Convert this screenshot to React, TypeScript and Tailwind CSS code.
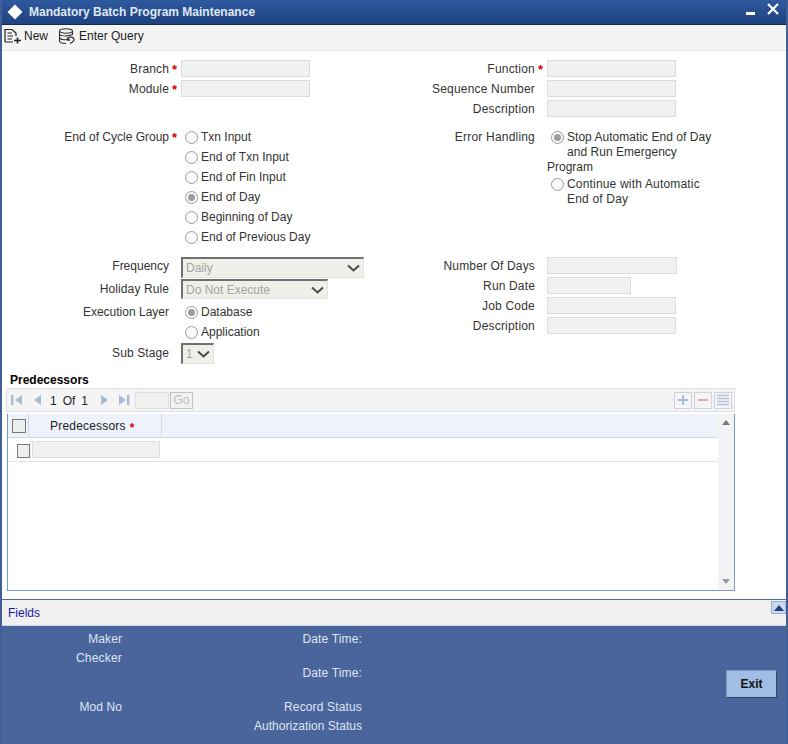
import React from "react";

const Star = () => <span className="text-[#cc0000] font-bold text-[13px] leading-none w-[8px] mt-[3px]">*</span>;

function Input({ w = 129, h = 17 }: { w?: number; h?: number }) {
  return <div className="bg-[#f1f1f1] border border-[#dcdcdc] box-border shrink-0" style={{ width: w, height: h }} />;
}

function Row({ label, labelW, star, inputW = 129, wide }: { label: string; labelW: number; star?: boolean; inputW?: number; wide?: boolean }) {
  return (
    <div className="flex items-start h-[20px]">
      <div className={wide ? "text-right leading-[19px] tracking-[0.2px] whitespace-nowrap" : "text-right leading-[19px] tracking-[0.15px] whitespace-nowrap"} style={{ width: labelW }}>{label}</div>
      <div className="w-[12px] pl-[3px] flex">{star && <Star />}</div>
      <Input w={inputW} />
    </div>
  );
}

function Radio({ checked }: { checked?: boolean }) {
  return (
    <span className="w-[13px] h-[13px] rounded-full border border-[#9a9a9a] bg-[#fafafa] flex items-center justify-center shrink-0">
      {checked && <span className="w-[7px] h-[7px] rounded-full bg-[#9c9c9c]" />}
    </span>
  );
}

function RadioRow({ label, checked }: { label: string; checked?: boolean }) {
  return (
    <div className="flex items-center gap-[3px] h-[20px] pl-[4px]">
      <Radio checked={checked} />
      <span>{label}</span>
    </div>
  );
}

function Sel({ w, text, h = 20 }: { w: number; text: string; h?: number }) {
  return (
    <div className="flex items-center justify-between box-border bg-[#f1efea] border-l-2 border-t-2 border-r border-b border-l-[#707070] border-t-[#707070] border-r-[#e4e2dd] border-b-[#e4e2dd] pl-[3px] pr-[3px] text-[#a3a3a3]" style={{ width: w, height: h }}>
      <span>{text}</span>
      <svg width="13" height="8" viewBox="0 0 13 8"><path d="M1 1.5 L6.5 6.5 L12 1.5" fill="none" stroke="#4a4a4a" strokeWidth="2" /></svg>
    </div>
  );
}

function Btn({ children }: { children: React.ReactNode }) {
  return <div className="w-[18px] h-[17px] border border-[#d0d4da] bg-[#f4f5f7] flex items-center justify-center">{children}</div>;
}

export default function App() {
  return (
    <div className="w-[788px] h-[744px] flex flex-col bg-white border-x-2 border-[#3f5f96] text-[12px] text-[#333] overflow-hidden" style={{ fontFamily: '"Liberation Sans", Arial, sans-serif' }}>
      {/* title */}
      <div className="h-[25px] shrink-0 -mx-[2px] flex items-center bg-gradient-to-b from-[#2f5a9f] to-[#1f427f] border-b border-[#13294f] pl-[7px] pr-[9px]">
        <svg width="16" height="16" viewBox="0 0 16 16" className="shrink-0"><path d="M8 0.5 L15.5 8 L8 15.5 L0.5 8Z" fill="#fff" /></svg>
        <span className="ml-[6px] font-bold text-[12px] text-[#dfe7f5]">Mandatory Batch Program Maintenance</span>
        <div className="ml-auto flex items-start gap-[12px]">
          <div className="w-[9px] h-[3px] bg-white mt-[3px]" />
          <svg width="12" height="12" viewBox="0 0 12 12" className="-mt-[6px]"><path d="M1 1 L11 11 M11 1 L1 11" stroke="#fff" strokeWidth="2.2" /></svg>
        </div>
      </div>
      {/* toolbar */}
      <div className="h-[26px] shrink-0 flex items-center bg-[#f4f4f4] border-b border-[#ececec] pl-[2px] pb-[3px] text-[#222]">
        <svg width="18" height="16" viewBox="0 0 18 16" fill="none" stroke="#222" strokeWidth="1.2"><path d="M1 14 V1.5 H8 L12 5 V8 M1 14 H9 M3.5 5 H8 M3.5 8 H9 M3.5 11 H8" /><path d="M10 12.5 H17 M13.5 9.5 V15.5" strokeWidth="1.6" /></svg>
        <span className="ml-[2px]">New</span>
        <svg width="18" height="17" viewBox="0 0 18 17" fill="none" stroke="#333" strokeWidth="1.1" className="ml-[10px]"><ellipse cx="8" cy="3" rx="6.5" ry="2.2" /><path d="M1.5 3 V13 C1.5 15 5 15.5 8 15.5 M14.5 3 V7 M1.5 6.5 C3 8.5 11 8.5 14.5 6.5 M1.5 10 C3 11.5 6 12 9 11.5" /><path d="M10 11 C11 8.5 15.5 8.5 16 11.5 C16 13.5 14 14.5 12 15.5 M9.5 9.5 V12 H12" strokeWidth="1.3" /></svg>
        <span className="ml-[3px]">Enter Query</span>
      </div>

      {/* form */}
      <div className="flex-1 flex flex-col min-h-0">
        <div className="flex pt-[9px]">
          <div className="w-[414px]">
            <Row label="Branch" labelW={167} star />
            <Row label="Module" labelW={167} star />
          </div>
          <div>
            <Row label="Function" labelW={119} star wide />
            <Row label="Sequence Number" labelW={119} wide />
            <Row label="Description" labelW={119} wide />
          </div>
        </div>

        <div className="flex pt-[9px] h-[130px] -mt-[1px] box-content">
          <div className="w-[414px] flex">
            <div className="w-[167px] text-right leading-[18px]">End of Cycle Group</div>
            <div className="w-[12px] pl-[3px] flex"><Star /></div>
            <div className="-mt-[1px]">
              <RadioRow label="Txn Input" />
              <RadioRow label="End of Txn Input" />
              <RadioRow label="End of Fin Input" />
              <RadioRow label="End of Day" checked />
              <RadioRow label="Beginning of Day" />
              <RadioRow label="End of Previous Day" />
            </div>
          </div>
          <div className="flex">
            <div className="w-[119px] text-right leading-[18px] tracking-[0.2px]">Error Handling</div>
            <div className="w-[12px]" />
            <div className="w-[172px] leading-[15px] pt-[2px]">
              <div className="relative pl-[20px] tracking-[0.03px]">
                <span className="absolute left-[4px] top-[1px]"><Radio checked /></span>
                Stop Automatic End of Day<br />and Run Emergency
              </div>
              <div>Program</div>
              <div className="relative pl-[20px] mt-[2px] tracking-[0.18px]">
                <span className="absolute left-[4px] top-[1px]"><Radio /></span>
                Continue with Automatic<br />End of Day
              </div>
            </div>
          </div>
        </div>

        <div className="flex mt-[-1px]">
          <div className="w-[414px] flex flex-col">
            <div className="flex h-[22px]">
              <div className="w-[167px] text-right leading-[18px]">Frequency</div>
              <div className="w-[12px]" />
              <Sel w={183} text="Daily" h={21} />
            </div>
            <div className="flex h-[23px]">
              <div className="w-[167px] text-right leading-[20px] tracking-[0.1px]">Holiday Rule</div>
              <div className="w-[12px]" />
              <Sel w={147} text="Do Not Execute" />
            </div>
            <div className="flex">
              <div className="w-[167px] text-right leading-[20px]">Execution Layer</div>
              <div className="w-[12px]" />
              <div>
                <RadioRow label="Database" checked />
                <RadioRow label="Application" />
              </div>
            </div>
            <div className="flex mt-[1px]">
              <div className="w-[167px] text-right leading-[20px] tracking-[0.1px]">Sub Stage</div>
              <div className="w-[12px]" />
              <Sel w={33} text="1" h={21} />
            </div>
          </div>
          <div>
            <Row label="Number Of Days" labelW={119} inputW={130} />
            <Row label="Run Date" labelW={119} inputW={84} />
            <Row label="Job Code" labelW={119} wide />
            <Row label="Description" labelW={119} wide />
          </div>
        </div>

        {/* grid */}
        <div className="mt-[8px] pl-[8px] font-bold text-black leading-[16px]">Predecessors</div>
        <div className="ml-[4px] w-[729px] h-[24px] flex items-center bg-[#f4f4f4] border border-[#dde1e7] pl-[4px] pr-[2px] text-[#222]">
          <svg width="12" height="12" viewBox="0 0 12 12" fill="#a9bad6"><rect x="0" y="1" width="2.5" height="10" /><path d="M11 1 V11 L4 6Z" /></svg>
          <svg width="9" height="12" viewBox="0 0 9 12" fill="#a9bad6" className="ml-[10px]"><path d="M8 1 V11 L1 6Z" /></svg>
          <span className="ml-[8px] mt-[1px]">1</span>
          <span className="ml-[6px] mt-[1px]">Of</span>
          <span className="ml-[6px] mt-[1px]">1</span>
          <svg width="9" height="12" viewBox="0 0 9 12" fill="#a9bad6" className="ml-[12px]"><path d="M1 1 V11 L8 6Z" /></svg>
          <svg width="12" height="12" viewBox="0 0 12 12" fill="#a9bad6" className="ml-[9px]"><path d="M1 1 V11 L8 6Z" /><rect x="9" y="1" width="2.5" height="10" /></svg>
          <div className="w-[34px] h-[17px] bg-[#f1f1f1] border border-[#e0e0e0] ml-[5px]" />
          <div className="w-[23px] h-[17px] bg-[#f1f1f1] border border-[#c4c4c4] ml-[1px] text-[#c0c0c0] flex items-center justify-center">Go</div>
          <div className="ml-auto flex gap-[2px]">
            <Btn><svg width="12" height="12" viewBox="0 0 12 12"><path d="M6 1 V11 M1 6 H11" stroke="#a9bad6" strokeWidth="2" /></svg></Btn>
            <Btn><svg width="12" height="12" viewBox="0 0 12 12"><path d="M1 6 H11" stroke="#e5a9a9" strokeWidth="2" /></svg></Btn>
            <Btn><svg width="14" height="12" viewBox="0 0 14 12"><path d="M1 1.5 H13 M1 4.5 H13 M1 7.5 H13 M1 10.5 H13" stroke="#b6c3d9" strokeWidth="1.4" /></svg></Btn>
          </div>
        </div>
        <div className="ml-[5px] mt-[2px] w-[728px] h-[177px] flex border-l border-r border-b border-[#7b9cc0] box-border">
          <div className="flex-1 flex flex-col min-w-0">
            <div className="h-[24px] flex bg-[#eef2fa] border-b border-[#d2d8e4] shrink-0">
              <div className="w-[21px] border-r border-[#d2d8e4] flex items-center justify-center pl-[1px]">
                <div className="w-[14px] h-[14px] border border-[#777] bg-[#eee]" />
              </div>
              <div className="w-[133px] border-r border-[#d2d8e4] flex items-center pl-[21px] pt-[1px] text-[#222] tracking-[0.2px]">
                Predecessors<span className="text-[#cc0000] font-bold ml-[4px] mt-[3px]">*</span>
              </div>
            </div>
            <div className="h-[24px] flex border-b border-[#dfe3ea] shrink-0">
              <div className="w-[23px] flex items-center justify-center border-r border-[#eceef2] pl-[9px] pt-[2px]">
                <div className="w-[13px] h-[14px] border border-[#777] bg-[#eee] shrink-0" />
              </div>
              <div className="ml-[1px] mt-[3px]"><Input w={128} h={17} /></div>
            </div>
          </div>
          <div className="w-[16px] bg-[#f3f3f3] flex flex-col items-center justify-between py-[6px] shrink-0">
            <svg width="8" height="5" viewBox="0 0 8 5"><path d="M0 5 L4 0 L8 5Z" fill="#777" /></svg>
            <svg width="8" height="5" viewBox="0 0 8 5"><path d="M0 0 L4 5 L8 0Z" fill="#999" /></svg>
          </div>
        </div>

        {/* fields bar */}
        <div className="mt-[8px] h-[27px] shrink-0 bg-[#f0f0f0] border-t border-[#4f6d9c] border-b border-b-[#cfd8e6] flex items-center justify-between pl-[6px] pt-[1px] pr-0 text-[#1a1a99]">
          <span>Fields</span>
          <div className="w-[15px] h-[13px] -mt-[11px] bg-[#c9d8ec] border border-[#9ab3d4] flex items-center justify-center">
            <svg width="10" height="6" viewBox="0 0 10 6"><path d="M0 6 L5 0 L10 6Z" fill="#1f427f" /></svg>
          </div>
        </div>

        {/* footer */}
        <div className="flex-1 -mx-[2px] bg-[#4a659b] text-[#dfe6f4] flex relative">
          <div className="w-[122px] text-right pt-[6px] leading-[14px] tracking-[0.1px]">
            <div>Maker</div>
            <div className="mt-[5px] tracking-[0.2px]">Checker</div>
            <div className="mt-[35px]">Mod No</div>
          </div>
          <div className="w-[240px] text-right pt-[6px] leading-[14px]">
            <div className="tracking-[0.15px]">Date Time:</div>
            <div className="mt-[20px] tracking-[0.15px]">Date Time:</div>
            <div className="mt-[20px] tracking-[0.15px]">Record Status</div>
            <div className="mt-[5px] tracking-[0.03px]">Authorization Status</div>
          </div>
          <div className="ml-auto mr-[11px] mt-[44px] w-[51px] h-[28px] bg-[#a0bde4] border border-[#7e9ac4] border-r-[#2f4468] border-b-[#2f4468] flex items-center justify-center text-[#111] font-bold text-[12px]">Exit</div>
        </div>
      </div>
    </div>
  );
}
